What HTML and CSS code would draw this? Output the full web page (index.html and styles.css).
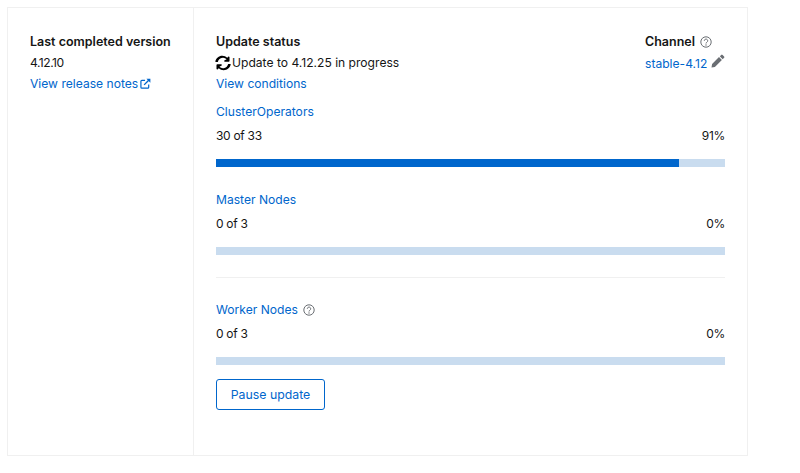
FILE: index.html
```html
<!DOCTYPE html>
<html lang="en">
<head>
    <meta charset="UTF-8">
    <title>Cluster update status</title>
    <link rel="stylesheet" href="styles.css">
</head>
<body>

<div class="card">
    <div class="side">
        <div class="label">Last completed version</div>
        <div class="line version">4.12.10</div>
        <a class="line link" href="#">View release notes
            <svg class="ext-icon" viewBox="0 0 12 12"><path d="M9.5 7v3a1 1 0 0 1-1 1H2a1 1 0 0 1-1-1V3.500a1 1 0 0 1 1-1h3.500" fill="none" stroke="currentColor" stroke-width="1.300"/><path d="M4.500 7.500 9.500 2.500" fill="none" stroke="currentColor" stroke-width="1.500"/><path d="M7 .8h4.300v4.300z" fill="currentColor"/></svg>
        </a>
    </div>
    <div class="main">
        <div class="top">
            <div>
                <div class="label">Update status</div>
                <div class="line status">
                    <svg class="sync-icon" viewBox="0 0 512 512"><path d="M370.700 133.300A168 168 0 0 0 94 212.600c-1.400 6-6.700 10.400-12.900 10.400H24c-8.200 0-14.500-7.500-13-15.600C30 102 122.400 24 233.600 24c61 0 116.300 24 157.200 63l33-33C437.900 40 464 49.900 464 70v124c0 12.500-10.700 24-24 24H316c-21.400 0-32-25.900-17-41z"/><path d="M141.300 378.700A168 168 0 0 0 418 299.400c1.400-6 6.700-10.400 12.900-10.400H488c8.200 0 14.500 7.500 13 15.600C482 410 389.600 488 278.400 488c-61 0-116.300-24-157.200-63l-33 33C74.100 472 48 462.100 48 442V318c0-12.500 10.700-24 24-24h124c21.400 0 32 25.900 17 41z"/></svg>
                    Update to 4.12.25 in progress
                </div>
                <a class="line link" href="#">View conditions</a>
            </div>
            <div class="channel">
                <div class="label">Channel
                    <svg class="help-icon" viewBox="0 0 12 12"><circle cx="6" cy="6" r="5.200" fill="none" stroke="currentColor"/><path d="M4.300 4.800a1.700 1.700 0 1 1 2.600 1.400C6.300 6.600 6 6.900 6 7.500" fill="none" stroke="currentColor"/><circle cx="6" cy="9" r=".7" fill="currentColor"/></svg>
                </div>
                <div class="line channel-value">
                    <a class="link" href="#">stable-4.12</a>
                    <svg class="pencil-icon" viewBox="0 0 14 14"><path d="M10.200.9a1 1 0 0 1 1.400 0l1.500 1.500a1 1 0 0 1 0 1.400L11.700 5.200 8.800 2.300zM8 3.100 10.900 6l-7 7-3.400.6.600-3.500z"/></svg>
                </div>
            </div>
        </div>

        <div class="progress first">
            <a class="link" href="#">ClusterOperators</a>
            <div class="counts"><span>30 of 33</span><span>91%</span></div>
            <div class="track"><div class="fill" style="width: 91%"></div></div>
        </div>

        <div class="progress">
            <a class="link" href="#">Master Nodes</a>
            <div class="counts"><span>0 of 3</span><span>0%</span></div>
            <div class="track"></div>
        </div>

        <hr class="divider">

        <div class="progress after-divider">
            <div>
                <a class="link" href="#">Worker Nodes</a>
                <svg class="help-icon" viewBox="0 0 12 12"><circle cx="6" cy="6" r="5.200" fill="none" stroke="currentColor"/><path d="M4.300 4.800a1.700 1.700 0 1 1 2.600 1.400C6.300 6.600 6 6.900 6 7.500" fill="none" stroke="currentColor"/><circle cx="6" cy="9" r=".7" fill="currentColor"/></svg>
            </div>
            <div class="counts"><span>0 of 3</span><span>0%</span></div>
            <div class="track"></div>
        </div>

        <button class="pause">Pause update</button>
    </div>
</div>

</body>
</html>
```

FILE: styles.css
```css
:root {
    --link-color: #0066cc;
    --text-color: #151515;
    --border-color: #f0f0f0;
    --track-color: #c9dcef;
    --font-family: 'Inter', sans-serif;
}

body {
    font-family: var(--font-family);
    font-size: 12.100px;
    line-height: 21px;
    color: var(--text-color);
    background-color: white;
    margin: 0;
    padding: 7px 0 0 7px;
}

.card {
    display: flex;
    width: 741px;
    height: 449px;
    box-sizing: border-box;
    border: 1px solid var(--border-color);
}

.side {
    width: 186px;
    box-sizing: border-box;
    padding: 23px 0 0 22px;
    border-right: 1px solid var(--border-color);
}

.main {
    flex: 1;
    padding: 23px 22px 0 22px;
}

.top {
    display: flex;
    justify-content: space-between;
}

.channel {
    width: 80px;
}

.channel-value {
    display: flex;
    justify-content: space-between;
    align-items: center;
    white-space: nowrap;
}

.label {
    font-size: 12.500px;
    font-weight: 600;
}

.line {
    display: block;
    height: 21px;
}

.version {
    letter-spacing: -0.5px;
}

.link {
    color: var(--link-color);
    text-decoration: none;
}

.status {
    display: flex;
    align-items: center;
    gap: 1px;
}

.sync-icon {
    width: 16px;
    height: 16px;
    margin-left: -1px;
}

.ext-icon {
    width: 11px;
    height: 11px;
    margin-left: -2px;
    vertical-align: -1px;
}

.help-icon {
    width: 12px;
    height: 12px;
    margin-left: 2px;
    vertical-align: -2px;
    color: #6a6e73;
}

.pencil-icon {
    width: 14px;
    height: 14px;
    margin-top: 2px;
    fill: #6a6e73;
}

.progress {
    margin-top: 22px;
}

.progress.first {
    margin-top: 7px;
}

.progress.after-divider {
    margin-top: 21px;
}

.counts {
    display: flex;
    justify-content: space-between;
    margin-top: 3px;
    font-size: 12px;
    letter-spacing: -0.3px;
}

.track {
    height: 8px;
    margin-top: 13px;
    background-color: var(--track-color);
}

.fill {
    height: 100%;
    background-color: var(--link-color);
}

.divider {
    height: 1px;
    margin: 22px 0 0 0;
    border: none;
    background-color: var(--border-color);
}

.pause {
    display: block;
    width: 109px;
    height: 31px;
    margin-top: 14px;
    padding: 0;
    font-family: var(--font-family);
    font-size: 12.300px;
    color: var(--link-color);
    background-color: white;
    border: 1px solid var(--link-color);
    border-radius: 3px;
}
```
